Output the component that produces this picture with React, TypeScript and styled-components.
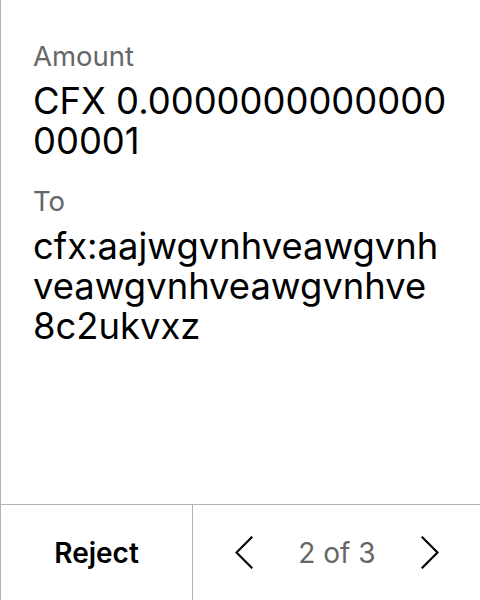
import React from 'react';
import styled, { createGlobalStyle } from 'styled-components';

const GlobalStyle = createGlobalStyle`
  html, body {
    margin: 0;
    padding: 0;
    background: #ffffff;
  }
  body {
    font-family: Inter, "Noto Sans", sans-serif;
    -webkit-font-smoothing: antialiased;
  }
`;

const Screen = styled.div`
  width: 480px;
  height: 600px;
  box-sizing: border-box;
  border-left: 1px solid #b4b4b4;
  display: flex;
  flex-direction: column;
  overflow: hidden;
`;

const Body = styled.div`
  flex: 1;
  padding: 39px 32px 0 32px;
  display: flex;
  flex-direction: column;
  gap: 23px;
`;

const Field = styled.div`
  display: flex;
  flex-direction: column;
  gap: 8px;
`;

const Label = styled.div`
  font-size: 27.5px;
  line-height: 34px;
  color: #666666;
`;

const Value = styled.div`
  font-size: 36.4px;
  line-height: 40px;
  color: #000000;
  word-break: break-all;
`;

const Footer = styled.div`
  height: 96px;
  box-sizing: border-box;
  border-top: 1px solid #b4b4b4;
  display: flex;
`;

const RejectCell = styled.button`
  width: 192px;
  box-sizing: border-box;
  border: none;
  border-right: 1px solid #b4b4b4;
  background: transparent;
  font-family: inherit;
  font-size: 28px;
  font-weight: 600;
  color: #000000;
  padding: 0;
`;

const Pager = styled.div`
  flex: 1;
  display: flex;
  align-items: center;
  justify-content: space-between;
  padding: 0 41px 0 42px;
`;

const NavButton = styled.button`
  border: none;
  background: transparent;
  padding: 0;
  display: flex;
  align-items: center;
`;

const PageText = styled.span`
  font-size: 28px;
  color: #666666;
`;

const Chevron = ({ dir }: { dir: 'left' | 'right' }) => (
  <svg width="18" height="33" viewBox="0 0 18 33" fill="none">
    <polyline
      points={dir === 'left' ? '16.5,1.5 1.5,16.5 16.5,31.5' : '1.5,1.5 16.5,16.5 1.5,31.5'}
      stroke="#000"
      strokeWidth="2.2"
      strokeLinecap="square"
      strokeLinejoin="miter"
    />
  </svg>
);

export default function App() {
  return (
    <>
      <GlobalStyle />
      <Screen>
        <Body>
          <Field>
            <Label>Amount</Label>
            <Value>CFX 0.000000000000000001</Value>
          </Field>
          <Field>
            <Label>To</Label>
            <Value>cfx:aajwgvnhveawgvnhveawgvnhveawgvnhve8c2ukvxz</Value>
          </Field>
        </Body>
        <Footer>
          <RejectCell>Reject</RejectCell>
          <Pager>
            <NavButton aria-label="Previous">
              <Chevron dir="left" />
            </NavButton>
            <PageText>2 of 3</PageText>
            <NavButton aria-label="Next">
              <Chevron dir="right" />
            </NavButton>
          </Pager>
        </Footer>
      </Screen>
    </>
  );
}
